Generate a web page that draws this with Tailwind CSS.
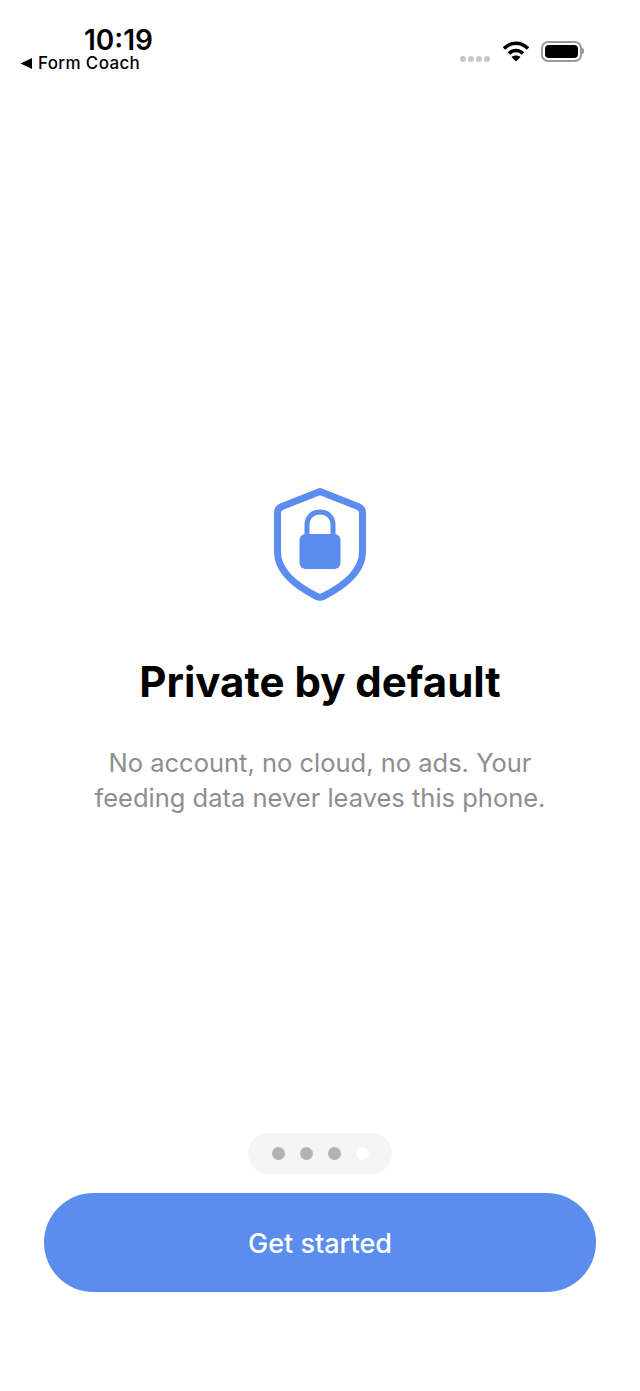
<!DOCTYPE html>
<html lang="en">
<head>
  <meta charset="utf-8">
  <title>Form Coach</title>
  <script src="https://cdn.jsdelivr.net/npm/@tailwindcss/browser@4"></script>
</head>
<body class="bg-white font-['Inter',sans-serif]">
  <div class="w-[640px] h-[1391px] flex flex-col overflow-hidden">

    <!-- status bar -->
    <header class="h-[80px] flex justify-between items-start">
      <div class="pl-[20px] pt-[26px]">
        <div class="pl-[64px] text-[28px] leading-[28px] font-semibold text-black">10:19</div>
        <div class="flex items-center gap-[6px] text-[17px] leading-[18px] font-medium tracking-[0.35px] text-black">
          <svg width="12" height="13" viewBox="0 0 12 13"><path d="M0.500 6.500 12 1v11z" fill="#000"/></svg>
          <span>Form Coach</span>
        </div>
      </div>
      <div class="flex items-center pt-[40px] pr-[56px]">
        <div class="flex gap-[2px] mt-[15px]">
          <span class="size-[6px] rounded-full bg-[#c7c7c7]"></span>
          <span class="size-[6px] rounded-full bg-[#c7c7c7]"></span>
          <span class="size-[6px] rounded-full bg-[#c7c7c7]"></span>
          <span class="size-[6px] rounded-full bg-[#c7c7c7]"></span>
        </div>
        <svg class="ml-[12px]" width="28" height="22" viewBox="0 0 28 22" fill="none" stroke="#000" stroke-width="3.6">
          <path d="M2 8.500C9 1.500 19 1.500 26 8.500"/>
          <path d="M7 13.500C11 9.500 17 9.500 21 13.500"/>
          <path d="M14 21.500 9.500 17C12 15 16 15 18.500 17z" fill="#000" stroke="none"/>
        </svg>
        <div class="ml-[11px] flex items-center">
          <div class="w-[41px] h-[21px] rounded-[7px] border-2 border-[#9a9a9a] p-[2px]">
            <div class="w-full h-full rounded-[4px] bg-black"></div>
          </div>
          <div class="w-[2px] h-[6px] rounded-r-full bg-[#9a9a9a]"></div>
        </div>
      </div>
    </header>

    <!-- onboarding page -->
    <main class="h-[1053px] flex flex-col items-center">
      <svg class="mt-[408px]" width="92" height="113" viewBox="0 0 92 113">
        <path d="M46 3.500 84 18.500C87 19.700 88.500 21.500 88.500 24.500V64C88.500 82 74 96 49 108.500C47 109.500 45 109.500 43 108.500C18 96 3.500 82 3.500 64V24.500C3.500 21.500 5 19.700 8 18.500Z" fill="none" stroke="#5b8def" stroke-width="7" stroke-linejoin="round"/>
        <path d="M33 49V37C33 29 38.500 24 46 24S59 29 59 37V49" fill="none" stroke="#5b8def" stroke-width="5"/>
        <rect x="25.500" y="46" width="41" height="35" rx="6" fill="#5b8def"/>
      </svg>
      <h1 class="mt-[56px] text-[42px] leading-[50px] font-bold text-black text-center">Private by default</h1>
      <p class="mt-[38px] text-[25.500px] leading-[35px] text-[#8e8e8e] text-center">No account, no cloud, no ads. Your<br>feeding data never leaves this phone.</p>
    </main>

    <!-- pager + button -->
    <div class="flex flex-col items-center">
      <div class="w-[144px] h-[41px] rounded-full bg-[#f5f5f5] flex items-center justify-center gap-[15px]">
        <span class="size-[13px] rounded-full bg-[#b3b3b3]"></span>
        <span class="size-[13px] rounded-full bg-[#b3b3b3]"></span>
        <span class="size-[13px] rounded-full bg-[#b3b3b3]"></span>
        <span class="size-[13px] rounded-full bg-white"></span>
      </div>
      <button class="mt-[19px] w-[552px] h-[99px] pt-[3px] rounded-[50px] bg-[#5b8def] text-white text-[27px] font-medium">Get started</button>
    </div>
  </div>
</body>
</html>
